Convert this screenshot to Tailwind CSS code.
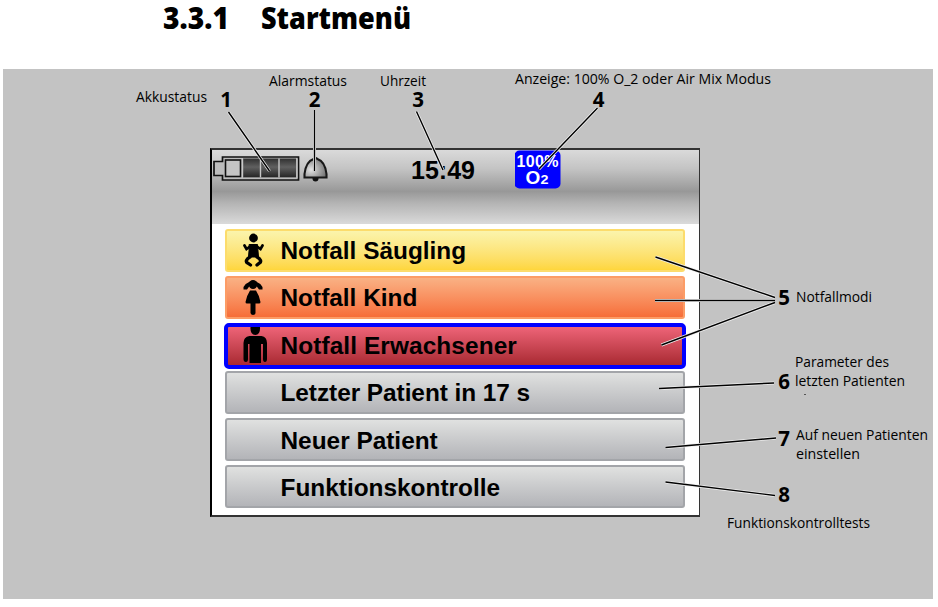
<!DOCTYPE html>
<html lang="de">
<head>
<meta charset="utf-8">
<title>3.3.1 Startmenü</title>
<script src="https://cdn.jsdelivr.net/npm/@tailwindcss/browser@4"></script>
</head>
<body class="bg-white text-black w-[938px] h-[607px] overflow-hidden font-['Open_Sans',sans-serif]">
<header class="h-[69px]">
  <h1>
    <svg class="block overflow-visible" width="938" height="69" viewBox="0 0 938 69" font-family="Open Sans, sans-serif" font-weight="800" font-size="30.500">
      <text x="163" y="29" textLength="66" lengthAdjust="spacingAndGlyphs">3.3.1</text>
      <text x="261" y="29" textLength="150" lengthAdjust="spacingAndGlyphs">Startmenü</text>
    </svg>
  </h1>
</header>
<main class="relative ml-[3px] w-[930px] h-[530px] bg-[#c3c3c3] pl-[207px] pt-[79px]">
  <!-- Device screen -->
  <section class="w-[490px] h-[369px] border-2 border-[#333] border-r-[1.5px] border-l-black bg-white font-['Liberation_Sans',Arial,sans-serif] font-bold">
    <div class="h-[74px] flex items-start bg-[linear-gradient(to_bottom,#dadada_0%,#c4c4c4_25%,#989898_56%,#b4b4b4_72%,#dadada_100%)]">
      <svg class="block shrink-0" width="122" height="44" viewBox="0 0 122 44">
        <defs>
          <linearGradient id="cell" x1="0" y1="0" x2="0" y2="1"><stop offset="0" stop-color="#303030"/><stop offset=".45" stop-color="#606060"/><stop offset="1" stop-color="#242424"/></linearGradient>
          <radialGradient id="bell" cx=".3" cy=".6" r=".7"><stop offset="0" stop-color="#e4e4e4"/><stop offset="1" stop-color="#747474"/></radialGradient>
        </defs>
        <g transform="translate(-1 -.5)">
        <path d="M11.500 7.500H87.500V30.500H11.500V26H3V12H11.500Z" fill="#bcbcbc" stroke="#111" stroke-width="1.700"/>
        <path d="M32 9H85V28H32Z" fill="url(#cell)"/>
        <path d="M31.500 9V28M49.500 9V28M68 9V28" stroke="#c8c8c8" stroke-width="1.400"/>
        <path d="M31 28.700H86.200V9" fill="none" stroke="#bbb" stroke-width="1"/>
        <rect x="14.500" y="10.500" width="15" height="16.500" fill="#c4c4c4" stroke="#111" stroke-width="1.600"/>
        <circle cx="104.500" cy="29" r="3" fill="#111"/>
        <path d="M93.500 28V24.500C94.500 16 98 11 102.500 9.500Q104.500 7.500 106.500 9.500C111 11 114.500 16 115.500 24.500V28Z" fill="url(#bell)" stroke="#181818" stroke-width="2.100"/>
        </g>
      </svg>
      <div class="ml-[77px] mt-[5px] text-[25px] leading-[30px] w-[66px]">15:49</div>
      <svg class="block ml-[38px]" width="48" height="41" viewBox="0 0 48 41" fill="#fff" font-family="Liberation Sans, Arial, sans-serif" font-weight="bold">
        <rect x="-.500" y=".5" width="46" height="38" rx="5" fill="#00f"/>
        <text x="1.500" y="16.500" font-size="16" textLength="42">100%</text>
        <text x="10.500" y="34" font-size="19">O</text><text x="25.500" y="34" font-size="12" textLength="8" lengthAdjust="spacingAndGlyphs">2</text>
      </svg>
    </div>
    <nav class="flex flex-col gap-[4.400px] pt-[4.500px] pl-[13px] text-[24.400px] leading-[43px] whitespace-nowrap">
      <div class="flex w-[460px] h-[43px] rounded-[3px] border-2 border-[#fcdc6c] bg-linear-to-b from-[#fbf4ac] to-[#fed63c]">
        <svg class="w-[53px] h-[40px] shrink-0" viewBox="0 0 53 40" fill="none" stroke="#000" stroke-linecap="round">
          <circle cx="26.500" cy="7" r="4.400" fill="#000" stroke="none"/>
          <path d="M22.500 13.500H30.500L31 20L31.500 26H21.500L22 20Z" fill="#000" stroke-width="1"/>
          <path d="M23 15.500L19.500 18L17.500 14.500M30 15.500L33.500 18L35.500 14.500" stroke-width="2.700"/>
          <path d="M23 26C19 28 18.500 31 20.500 32L23.500 34M30 26C34 28 34.500 31 32.500 32L30 34" stroke-width="3.300"/>
        </svg><span class="-mt-[2px] ml-[.5px]">Notfall Säugling</span></div>
      <div class="flex w-[460px] h-[43px] rounded-[3px] border-2 border-[#fc9c66] bg-linear-to-b from-[#f9b184] to-[#f66d38]">
        <svg class="w-[53px] h-[40px] shrink-0" viewBox="0 0 53 40">
          <ellipse cx="26" cy="6.500" rx="4.300" ry="4.600"/>
          <path d="M23 3.500Q19 5 16.500 9V11.500H20Q22 9 23 7ZM29 3.500Q33 5 35.500 9V11.500H32Q30 9 29 7Z"/>
          <path d="M23 12.500H29Q32 17 33.500 24Q33.500 25.500 32 25.500H28.500V35Q28.300 37 26 37Q24 37 23.500 35V25.500H20Q18.500 25.500 18.500 24Q20 17 23 12.500Z"/>
        </svg><span class="-mt-[2px] ml-[.5px]">Notfall Kind</span></div>
      <div class="-ml-[1.500px] mt-0 -mb-[3px] flex w-[462px] h-[46px] rounded-[5px] border-4 border-[#00f] bg-linear-to-b from-[#ee6478] to-[#a92932]">
        <svg class="w-[52.500px] h-[38px] shrink-0" viewBox="0 0 52.500 38">
          <path d="M22.500 0H32Q32.500 8 27.300 8Q22 8 22.500 0Z"/>
          <path d="M21.500 9H33.500Q39 10 39 16V32Q39 35 37 35Q35 35 35 32V17H33V36H21.500V17H20V32Q20 35 18 35Q15.500 35 15.500 32V16Q15.500 10 21.500 9Z"/>
        </svg><span class="-mt-[3px] ml-[.5px] tracking-[.1px]">Notfall Erwachsener</span></div>
      <div class="flex w-[460px] h-[43px] rounded-[3px] border-2 border-[#a3a5a9] bg-linear-to-b from-[#e0e1e0] to-[#b3b4b8] pl-[53.500px]"><span class="-mt-[2px] -tracking-[.05px]">Letzter Patient in 17 s</span></div>
      <div class="flex w-[460px] h-[43px] rounded-[3px] border-2 border-[#a3a5a9] bg-linear-to-b from-[#e0e1e0] to-[#b3b4b8] pl-[53.500px]"><span class="-mt-[1px]">Neuer Patient</span></div>
      <div class="flex w-[460px] h-[43px] rounded-[3px] border-2 border-[#a3a5a9] bg-linear-to-b from-[#e0e1e0] to-[#b3b4b8] pl-[53.500px]"><span class="-mt-[1px]">Funktionskontrolle</span></div>
    </nav>
  </section>
  <!-- Callouts; the viewBox uses page coordinates -->
  <svg class="absolute inset-0" width="930" height="530" viewBox="3 69 930 530" font-family="Open Sans, sans-serif">
    <defs><path id="leaders" d="M228.500 112L269.500 171M314.500 110V171M416.500 111.500L443 170M597.500 108L539 169M775 297.500L655.500 257M775 300.500H655M775 302.500L661.500 345M774 383L659 388.500M776 438L665.500 447.500M775 495.500L665.500 482"/></defs>
    <use href="#leaders" stroke="#eee" stroke-width="3"/>
    <use href="#leaders" stroke="#000" stroke-width="1.400"/>
    <g font-size="14.500">
      <text x="136" y="102" textLength="71" lengthAdjust="spacingAndGlyphs">Akkustatus</text>
      <text x="269" y="86" textLength="78" lengthAdjust="spacingAndGlyphs">Alarmstatus</text>
      <text x="380" y="86" textLength="46" lengthAdjust="spacingAndGlyphs">Uhrzeit</text>
      <text x="515" y="84" textLength="256" lengthAdjust="spacingAndGlyphs">Anzeige: 100% O_2 oder Air Mix Modus</text>
      <text x="796" y="302" textLength="76" lengthAdjust="spacingAndGlyphs">Notfallmodi</text>
      <text x="795" y="367" textLength="94" lengthAdjust="spacingAndGlyphs">Parameter des</text>
      <text x="795" y="386" textLength="110" lengthAdjust="spacingAndGlyphs">letzten Patienten</text>
      <text x="796" y="440" textLength="132" lengthAdjust="spacingAndGlyphs">Auf neuen Patienten</text>
      <text x="796" y="459" textLength="64" lengthAdjust="spacingAndGlyphs">einstellen</text>
      <text x="727" y="528" textLength="143" lengthAdjust="spacingAndGlyphs">Funktionskontrolltests</text>
    </g>
    <rect x="804" y="394" width="2" height="1" fill="#555"/>
    <g font-size="20.500" font-weight="700" text-anchor="middle">
      <text x="226" y="107">1</text><text x="314.500" y="107">2</text><text x="418" y="107">3</text><text x="598.500" y="107">4</text>
      <text x="784" y="305">5</text><text x="784" y="389">6</text><text x="784" y="446">7</text><text x="784" y="502">8</text>
    </g>
  </svg>
</main>
</body>
</html>
